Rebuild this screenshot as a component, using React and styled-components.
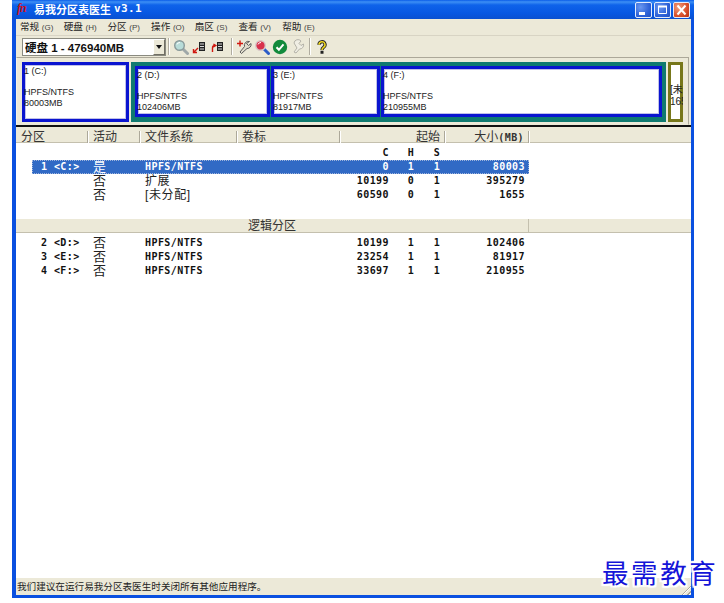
import styled, { createGlobalStyle } from 'styled-components'

const GlobalStyle = createGlobalStyle`
  html, body {
    margin: 0;
    padding: 0;
    background: #fff;
  }
  body {
    font-family: "Liberation Sans", "Noto Sans CJK SC", sans-serif;
  }
`
const cjk = `"Liberation Sans", "Noto Sans CJK SC", sans-serif`
const mono = `"DejaVu Sans Mono", "Noto Sans CJK SC", monospace`

const Page = styled.div`
  width: 724px;
  height: 603px;
  padding-left: 12px;
  box-sizing: border-box;
  position: relative;
  overflow: hidden;
`
const Win = styled.div`
  width: 682px;
  height: 598px;
  display: flex;
  flex-direction: column;
  box-sizing: border-box;
  border: solid #0a50e0;
  border-width: 0 3px 3px 4px;
  background: #ece9d8;
`
const TitleBar = styled.div`
  height: 19px;
  flex: none;
  margin: 0 -3px 0 -4px;
  padding: 0 4px 2px 5px;
  box-sizing: border-box;
  display: flex;
  align-items: center;
  background: linear-gradient(180deg, #0a5ce8 0, #3d8ff5 10%, #0f63ea 26%, #0757e2 70%, #0a50d0 100%);
  color: #fff;
`
const Logo = styled.span`
  width: 17px;
  font: italic bold 12px "Liberation Serif", serif;
  color: #c8141c;
  letter-spacing: -1px;
`
const TitleText = styled.span`
  font: bold 11px ${cjk};
  white-space: nowrap;
`
const TitleVersion = styled.span`
  font: bold 11px ${mono};
  margin-left: 3px;
  letter-spacing: .4px;
`
const WinButtons = styled.div`
  margin: 2px 0 0 auto;
  display: flex;
  gap: 2px;
`
const WinButton = styled.div`
  width: 17px;
  height: 16px;
  box-sizing: border-box;
  border: 1px solid #e4ecfc;
  border-radius: 2px;
  background: ${p => p.$close
    ? 'radial-gradient(circle at 30% 30%, #f0a080, #d8502c 60%, #b83010)'
    : 'radial-gradient(circle at 30% 30%, #6a98f0, #2e62d8 60%, #2250c0)'};
  display: flex;
  align-items: center;
  justify-content: center;
`
const MenuBar = styled.div`
  height: 17px;
  flex: none;
  padding: 0 0 2px 4px;
  box-sizing: border-box;
  display: flex;
  align-items: center;
  border-bottom: 1px solid #d8d4c4;
`
const MenuItem = styled.div`
  width: 43.7px;
  flex: none;
  font: 9.6px ${cjk};
  color: #222;
  white-space: nowrap;
`
const MenuKey = styled.span`
  font-size: 8px;
  color: #444;
`
const ToolBar = styled.div`
  height: 21px;
  flex: none;
  padding-left: 6px;
  display: flex;
  align-items: center;
`
const Combo = styled.div`
  width: 144px;
  height: 18px;
  box-sizing: border-box;
  border: 1px solid #8a8a80;
  background: #fff;
  display: flex;
  align-items: center;
  padding-left: 2px;
  font: bold 11.5px ${cjk};
  color: #111;
`
const ComboArrow = styled.div`
  margin-left: auto;
  width: 12px;
  height: 16px;
  box-sizing: border-box;
  background: #ece9d8;
  border: 1px solid;
  border-color: #fff #716f64 #716f64 #fff;
  display: flex;
  align-items: center;
  justify-content: center;
  &::after {
    content: '';
    border: 3px solid transparent;
    border-top: 4px solid #111;
    border-bottom: 0;
  }
`
const ToolSep = styled.div`
  width: 2px;
  height: 17px;
  margin: 0 2px;
  border-left: 1px solid #b0aca0;
  border-right: 1px solid #fff;
  box-sizing: border-box;
`
const ToolGroup = styled.div`
  display: flex;
  padding-right: ${p => p.$trail || 0}px;
`
const ToolButton = styled.div`
  width: 18px;
  height: 18px;
  display: flex;
  align-items: center;
  justify-content: center;
`
const DiskPanel = styled.div`
  height: 68px;
  flex: none;
  box-sizing: border-box;
  margin-right: 2px;
  padding: 4px 0 0 5px;
  display: flex;
  align-items: flex-start;
  border: 1px solid;
  border-color: #aca899 #aca899 transparent #f4f2e8;
`
const Part = styled.div`
  box-sizing: border-box;
  background: #fff;
  box-shadow: inset 0 0 0 3px #0a14d0, inset 0 0 0 4px #c0c0e8;
  padding: 4px 0 0 2px;
  font: 9px/10.5px ${cjk};
  color: #222;
  overflow: hidden;
  white-space: nowrap;
  width: ${p => p.$w}px;
  height: ${p => p.$h}px;
`
const ExtendedBox = styled.div`
  width: 535px;
  height: 60px;
  box-sizing: border-box;
  padding: 4px;
  background: #0f7a70;
  display: flex;
  align-items: flex-start;
  gap: 1px;
  margin-left: 2px;
`
const FreeBox = styled.div`
  width: 15px;
  height: 60px;
  margin-left: 2px;
  box-sizing: border-box;
  box-shadow: inset 0 0 0 3px #77771a;
  background: #fff;
  overflow: hidden;
  padding: 22px 0 0 2px;
  font: 10px/12px ${cjk};
  color: #222;
  white-space: nowrap;
`
const BlackLine = styled.div`
  height: 2px;
  flex: none;
  background: #111;
`
const HeaderRow = styled.div`
  height: 16px;
  flex: none;
  display: grid;
  grid-template-columns: 72px 52px 97px 103px 105px 84px 1fr;
  border-bottom: 1px solid #c4c0ae;
  box-sizing: border-box;
  font: 12px/12px ${cjk};
  color: #333;
`
const HeaderCell = styled.div`
  box-sizing: border-box;
  margin-top: 4px;
  border-right: 1px solid #aca899;
  box-shadow: 1px 0 0 #fff;
  padding: 0 ${p => (p.$right ? 4 : 0)}px 0 ${p => (p.$right ? 0 : 5)}px;
  text-align: ${p => (p.$right ? 'right' : 'left')};
  white-space: nowrap;
  &:last-child {
    border-right: 0;
    box-shadow: none;
  }
`
const HeaderMono = styled.span`
  font: bold 10px ${mono};
  letter-spacing: .4px;
`
const List = styled.div`
  flex: 1;
  background: #fff;
  min-height: 0;
`
const Row = styled.div`
  width: 497px;
  margin-left: 16px;
  height: ${p => p.$h || 14}px;
  box-sizing: border-box;
  display: grid;
  grid-template-columns: 56px 52px 195px 54px 44px 8px 88px;
  align-items: ${p => (p.$caps ? 'end' : 'center')};
  padding-bottom: ${p => (p.$caps ? 1 : 0)}px;
  font: bold 10px/12px ${mono};
  letter-spacing: .42px;
  color: ${p => (p.$selected ? '#fff' : '#111')};
  background: ${p => (p.$selected ? '#316ac5' : 'transparent')};
  outline: ${p => (p.$selected ? '1px dotted #9fb4dc' : 'none')};
  outline-offset: -1px;
`
const NameCell = styled.span`
  padding-left: 9px;
  white-space: pre;
`
const CnCell = styled.span`
  padding-left: 5px;
  font: 13px/12px ${cjk};
  letter-spacing: 0;
  color: ${p => (p.$selected ? '#fff' : '#222')};
`
const FsCell = styled.span`
  padding-left: 5px;
  white-space: nowrap;
`
const FsCn = styled.span`
  font: 12px/12px ${cjk};
  letter-spacing: .6px;
  color: #222;
`
const RightCell = styled.span`
  text-align: right;
  padding-right: ${p => p.$pr || 0}px;
`
const CenterCell = styled.span`
  display: flex;
  justify-content: center;
`
const SectionBar = styled.div`
  height: 14px;
  margin: 17px 0 3px;
  background: #ece9d8;
  border-bottom: 1px solid #c4c0ae;
  box-sizing: border-box;
  display: grid;
  grid-template-columns: 513px 1fr;
  font: 12px/14px ${cjk};
  color: #333;
`
const SectionTitle = styled.div`
  text-align: center;
  border-right: 1px solid #c4c0ae;
`
const StatusBar = styled.div`
  height: 17px;
  flex: none;
  padding-left: 1px;
  font: 9.6px/18px ${cjk};
  color: #222;
  position: relative;
  white-space: nowrap;
`
const Grip = styled.div`
  position: absolute;
  right: 0;
  bottom: 0;
  width: 12px;
  height: 12px;
  background: repeating-linear-gradient(135deg, #ece9d8 0 2px, #aca899 2px 3px, #fff 3px 4px);
  clip-path: polygon(100% 0, 100% 100%, 0 100%);
`
const Watermark = styled.div`
  position: absolute;
  left: 602px;
  top: 556px;
  width: 120px;
  font: 26.5px/32px "Noto Sans CJK SC", sans-serif;
  letter-spacing: 2.6px;
  color: #1414d8;
  white-space: nowrap;
  text-shadow: 2px 0 1px #fff, -2px 0 1px #fff, 0 2px 1px #fff, 0 -2px 1px #fff,
    2px 2px 1px #fff, -2px -2px 1px #fff, 2px -2px 1px #fff, -2px 2px 1px #fff;
`

const LensIcon = ({ lens = '#b8dcd8', ring = '#8a9a9a', handle = '#a0a8a8' }) => (
  <svg width="16" height="16" viewBox="0 0 16 16">
    <path d="M10 10l4.5 4.5" stroke={handle} strokeWidth="3" strokeLinecap="round" />
    <circle cx="6.5" cy="6.5" r="4.8" fill={lens} stroke={ring} strokeWidth="1.4" />
    <path d="M4 5.5a3 3 0 0 1 3-2" stroke="#fff" fill="none" />
  </svg>
)
const DiskArrowIcon = ({ up }) => (
  <svg width="16" height="16" viewBox="0 0 16 16">
    <rect x="8" y="3" width="6" height="9" fill="#222" />
    <path d="M9 5h4M9 7.5h4M9 10h4" stroke="#ddd" />
    {up
      ? <path d="M3.5 13V9a2.5 2.5 0 0 1 2.5-2.5M4.4 5l2.4 1.5-2.4 1.5" stroke="#d01810" strokeWidth="1.4" fill="none" />
      : <path d="M7 9l-4 4M2.5 10v3.5H6" stroke="#d01810" strokeWidth="1.4" fill="none" />}
  </svg>
)
const WrenchIcon = () => (
  <svg width="16" height="16" viewBox="0 0 16 16">
    <path d="M1 4.5h6M4 1.5v6" stroke="#d01810" strokeWidth="1.4" />
    <path d="M13.5 2.5a4 4 0 0 0-5 5L4 13l1.5 1.5 5.5-5a4 4 0 0 0 4-5l-2.5 2-2-2z" fill="#e0dccc" stroke="#5a5a5a" />
  </svg>
)
const CheckIcon = () => (
  <svg width="16" height="16" viewBox="0 0 16 16">
    <circle cx="8" cy="8" r="7.2" fill="#128a3c" />
    <path d="M4.5 8.2l2.4 2.6 4.6-5.4" stroke="#fff" strokeWidth="2" fill="none" />
  </svg>
)
const GreyToolIcon = () => (
  <svg width="16" height="16" viewBox="0 0 16 16">
    <path d="M4 4a4 4 0 0 1 7-2l-2 2.5 2 2 2.5-1.5a4 4 0 0 1-4 5L6 14l-2-1 3-4z" fill="#f0eee4" stroke="#b4b2a8" />
  </svg>
)
const HelpIcon = () => (
  <svg width="12" height="14" viewBox="0 0 16 18">
    <path d="M4 6a4 4 0 1 1 6 3.4C8.5 10.4 8 11 8 13" stroke="#222" strokeWidth="4.4" fill="none" />
    <path d="M4 6a4 4 0 1 1 6 3.4C8.5 10.4 8 11 8 13" stroke="#f0d820" strokeWidth="2" fill="none" />
    <rect x="6" y="14" width="4" height="4" fill="#222" />
  </svg>
)

const menus = [['常规', 'G'], ['硬盘', 'H'], ['分区', 'P'], ['操作', 'O'], ['扇区', 'S'], ['查看', 'V'], ['帮助', 'E']]
const primary = [
  { name: '1 <C:>', active: '是', fs: 'HPFS/NTFS', c: 0, h: 1, s: 1, size: 80003, selected: true },
  { name: '', active: '否', fs: '扩展', cn: true, c: 10199, h: 0, s: 1, size: 395279 },
  { name: '', active: '否', fs: '[未分配]', cn: true, c: 60590, h: 0, s: 1, size: 1655 },
]
const logical = [
  { name: '2 <D:>', active: '否', fs: 'HPFS/NTFS', c: 10199, h: 1, s: 1, size: 102406 },
  { name: '3 <E:>', active: '否', fs: 'HPFS/NTFS', c: 23254, h: 1, s: 1, size: 81917 },
  { name: '4 <F:>', active: '否', fs: 'HPFS/NTFS', c: 33697, h: 1, s: 1, size: 210955 },
]

function PartRow({ row }) {
  return (
    <Row $selected={row.selected}>
      <NameCell>{row.name}</NameCell>
      <CnCell $selected={row.selected}>{row.active}</CnCell>
      <FsCell>{row.cn ? <FsCn>{row.fs}</FsCn> : row.fs}</FsCell>
      <RightCell>{row.c}</RightCell>
      <CenterCell>{row.h}</CenterCell>
      <CenterCell>{row.s}</CenterCell>
      <RightCell $pr={4}>{row.size}</RightCell>
    </Row>
  )
}

function PartBox({ label, size, w, h = 51 }) {
  return (
    <Part $w={w} $h={h}>
      {label}<br /><br />HPFS/NTFS<br />{size}
    </Part>
  )
}

export default function App() {
  return (
    <Page>
      <GlobalStyle />
      <Win>
        <TitleBar>
          <Logo>fn</Logo>
          <TitleText>易我分区表医生</TitleText>
          <TitleVersion>v3.1</TitleVersion>
          <WinButtons>
            <WinButton>
              <svg width="15" height="14" viewBox="0 0 15 14"><rect x="3" y="9" width="6" height="3" fill="#fff" /></svg>
            </WinButton>
            <WinButton>
              <svg width="15" height="14" viewBox="0 0 15 14"><path d="M3.5 3.5h8v7h-8z" fill="none" stroke="#fff" /><path d="M3 3.5h9" stroke="#fff" strokeWidth="2" /></svg>
            </WinButton>
            <WinButton $close>
              <svg width="15" height="14" viewBox="0 0 15 14"><path d="M3.5 2.5l8 9M11.5 2.5l-8 9" stroke="#fff" strokeWidth="2" /></svg>
            </WinButton>
          </WinButtons>
        </TitleBar>
        <MenuBar>
          {menus.map(([name, key]) => (
            <MenuItem key={key}>{name} <MenuKey>({key})</MenuKey></MenuItem>
          ))}
        </MenuBar>
        <ToolBar>
          <Combo>硬盘 1 - 476940MB<ComboArrow /></Combo>
          <ToolSep />
          <ToolGroup $trail={3}>
            <ToolButton><LensIcon /></ToolButton>
            <ToolButton><DiskArrowIcon /></ToolButton>
            <ToolButton><DiskArrowIcon up /></ToolButton>
          </ToolGroup>
          <ToolSep />
          <ToolGroup>
            <ToolButton><WrenchIcon /></ToolButton>
            <ToolButton><LensIcon lens="#d8304c" ring="#d8c8c8" handle="#2c5cc8" /></ToolButton>
            <ToolButton><CheckIcon /></ToolButton>
            <ToolButton><GreyToolIcon /></ToolButton>
          </ToolGroup>
          <ToolSep />
          <ToolButton><HelpIcon /></ToolButton>
        </ToolBar>
        <DiskPanel>
          <PartBox label="1 (C:)" size="80003MB" w={107} h={60} />
          <ExtendedBox>
            <PartBox label="2 (D:)" size="102406MB" w={135} />
            <PartBox label="3 (E:)" size="81917MB" w={109} />
            <PartBox label="4 (F:)" size="210955MB" w={281} />
          </ExtendedBox>
          <FreeBox>[未分配]<br />1655MB</FreeBox>
        </DiskPanel>
        <BlackLine />
        <HeaderRow>
          <HeaderCell>分区</HeaderCell>
          <HeaderCell>活动</HeaderCell>
          <HeaderCell>文件系统</HeaderCell>
          <HeaderCell>卷标</HeaderCell>
          <HeaderCell $right>起始</HeaderCell>
          <HeaderCell $right>大小<HeaderMono>(MB)</HeaderMono></HeaderCell>
          <HeaderCell />
        </HeaderRow>
        <List>
          <Row $h={17} $caps>
            <span /><span /><span />
            <RightCell>C</RightCell>
            <CenterCell>H</CenterCell>
            <CenterCell>S</CenterCell>
            <span />
          </Row>
          {primary.map((row, i) => <PartRow key={i} row={row} />)}
          <SectionBar>
            <SectionTitle>逻辑分区</SectionTitle>
            <div />
          </SectionBar>
          {logical.map(row => <PartRow key={row.name} row={row} />)}
        </List>
        <StatusBar>
          我们建议在运行易我分区表医生时关闭所有其他应用程序。
          <Grip />
        </StatusBar>
      </Win>
      <Watermark>最需教育</Watermark>
    </Page>
  )
}
